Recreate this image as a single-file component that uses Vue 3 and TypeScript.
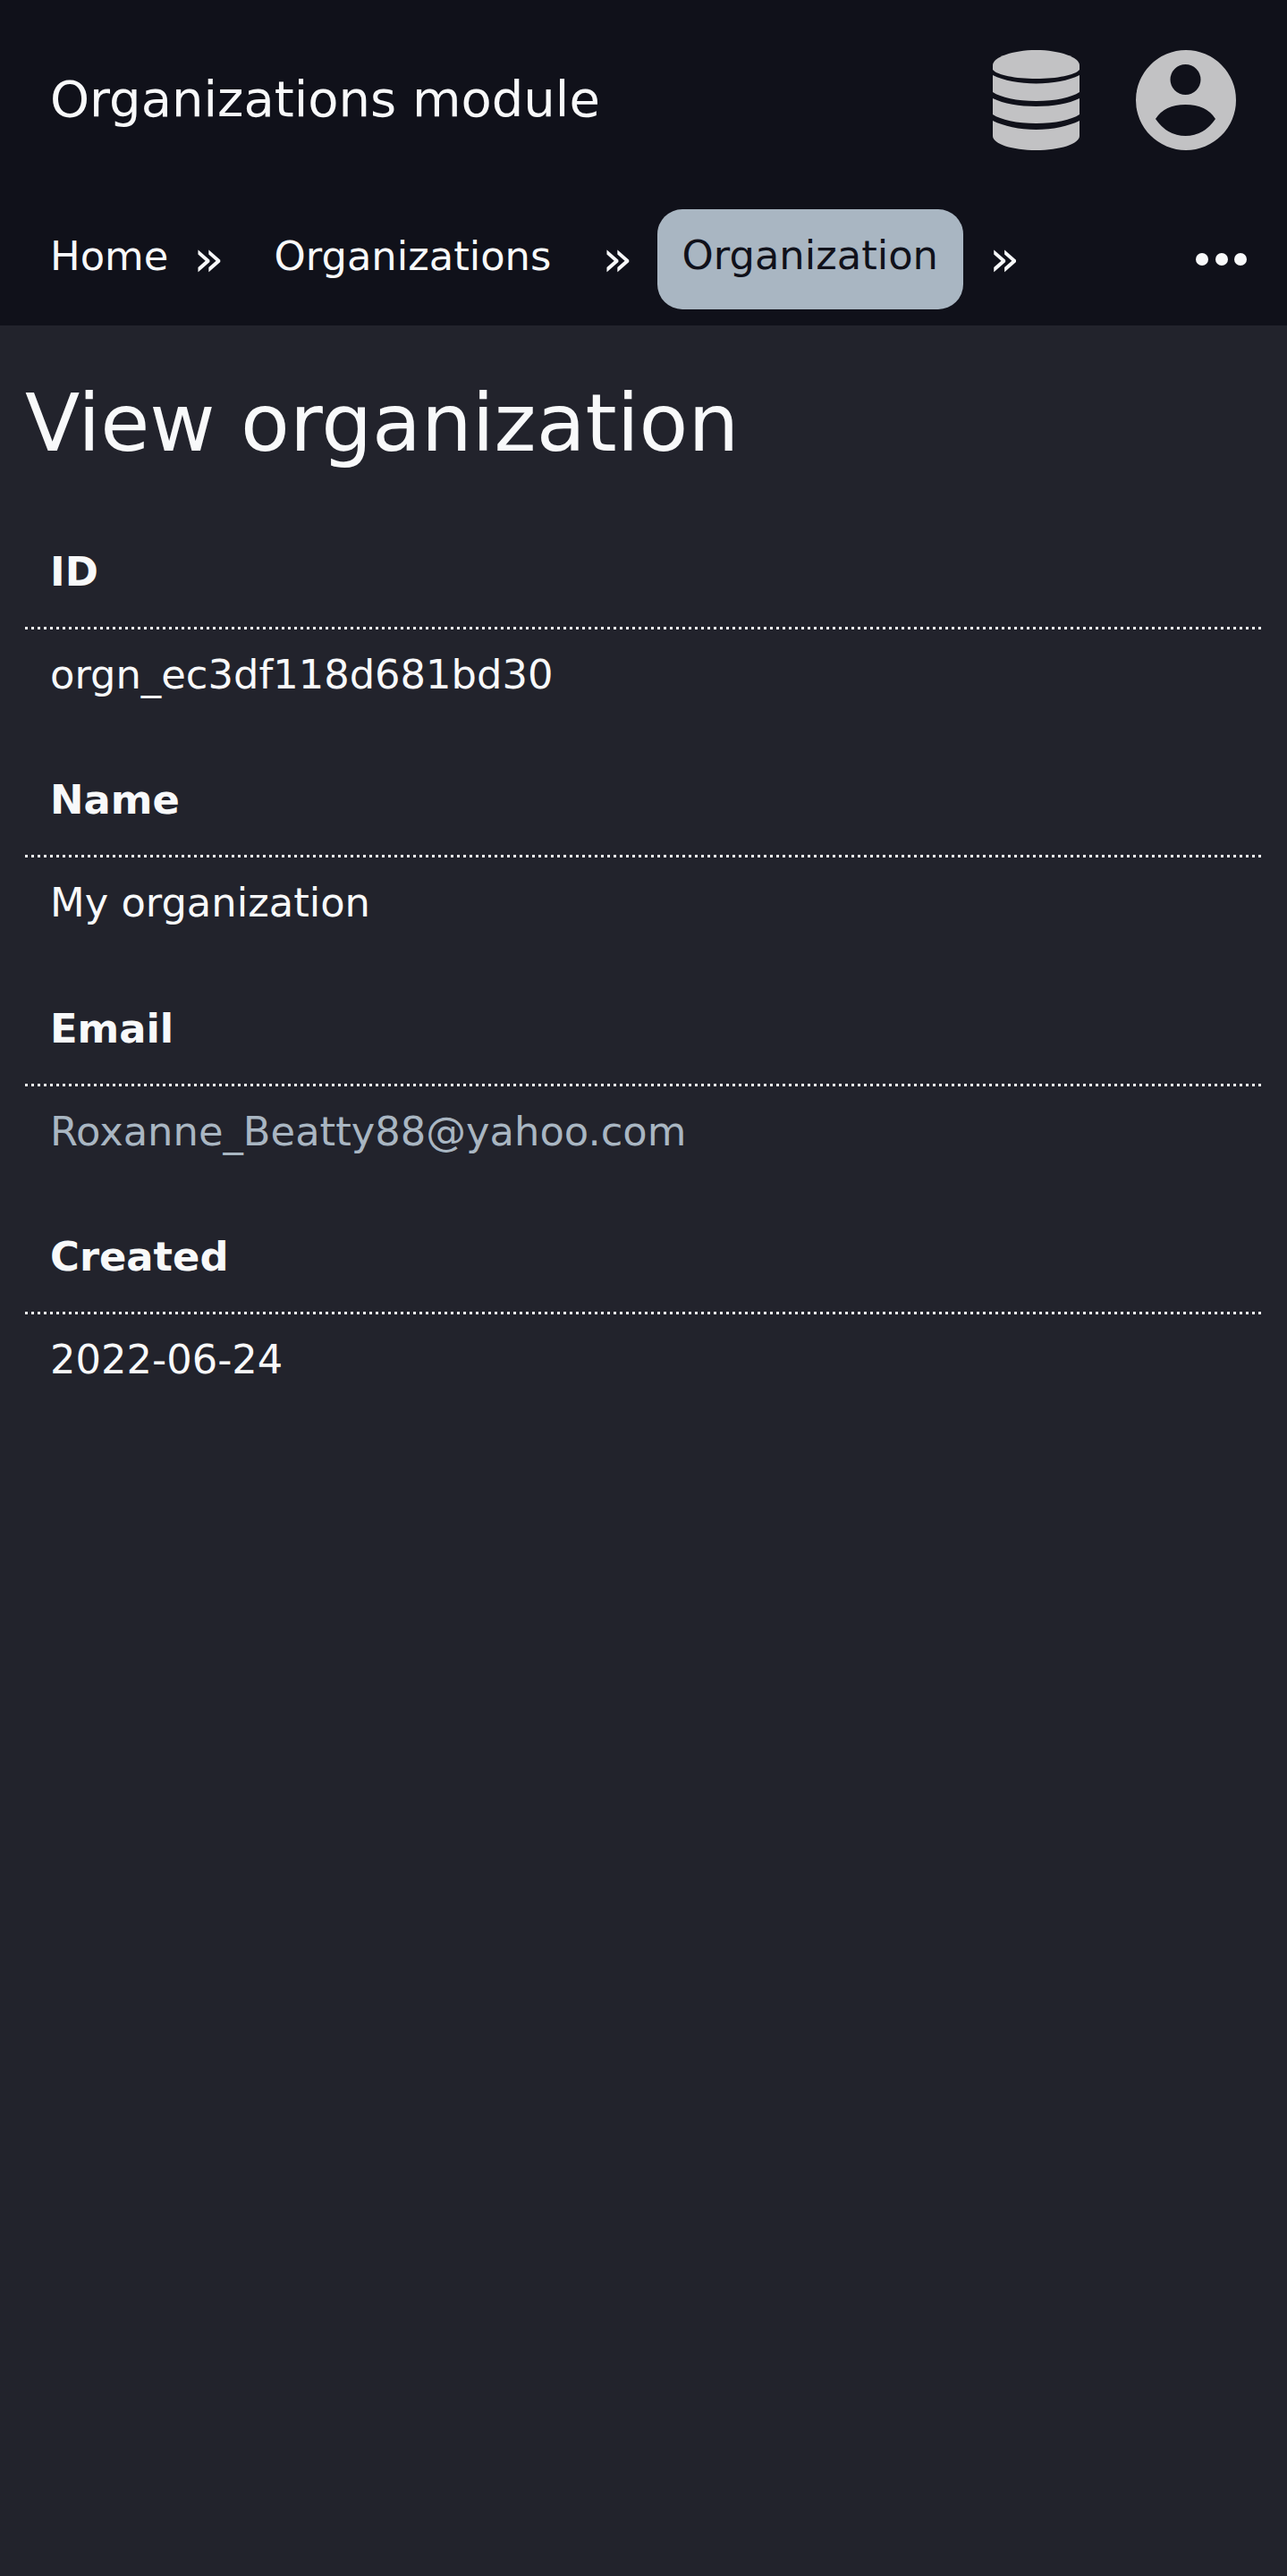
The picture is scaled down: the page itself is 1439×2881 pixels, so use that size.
<script setup lang="ts">
const fields = [
  { label: 'ID', value: 'orgn_ec3df118d681bd30' },
  { label: 'Name', value: 'My organization' },
  { label: 'Email', value: 'Roxanne_Beatty88@yahoo.com', link: true },
  { label: 'Created', value: '2022-06-24' },
]
</script>

<template>
  <div class="page">
    <header class="top">
      <div class="title-row">
        <span class="module">Organizations module</span>
        <div class="icons">
          <svg class="db" viewBox="0 0 97 112" width="97" height="112">
            <path d="M0 17C0 8 22 0 48.500 0S97 8 97 17V22C92 28 72 32 48.500 32S5 28 0 22z" />
            <path d="M0 28C12 34 30 37.500 48.500 37.500S85 34 97 28V47C88 53 70 57 48.500 57S9 53 0 47z" />
            <path d="M0 54C12 60 30 63 48.500 63S85 60 97 54V72C88 78 70 82 48.500 82S9 78 0 72z" />
            <path d="M0 79C12 85 30 89 48.500 89S85 85 97 79V96C97 105 75 112 48.500 112S0 105 0 96z" />
          </svg>
          <svg class="avatar" viewBox="0 0 112 112" width="112" height="112">
            <path fill-rule="evenodd" d="M56 0a56 56 0 1 0 0 112a56 56 0 1 0 0-112zM55.500 16a17 17 0 1 1 0 34a17 17 0 1 1 0-34zM22 77Q32 61 55.500 61T89 77Q76 96 55.500 96T22 77z" />
          </svg>
        </div>
      </div>
      <nav class="crumbs">
        <a class="crumb">Home</a>
        <span class="sep sep-a">»</span>
        <a class="crumb crumb-b">Organizations</a>
        <span class="sep sep-b">»</span>
        <a class="crumb active">Organization</a>
        <span class="sep sep-c">»</span>
        <div class="more">
          <i></i><i></i><i></i>
        </div>
      </nav>
    </header>

    <main class="content">
      <h1>View organization</h1>
      <dl>
        <template v-for="f in fields" :key="f.label">
          <dt>{{ f.label }}</dt>
          <dd :class="{ link: f.link }">{{ f.value }}</dd>
        </template>
      </dl>
    </main>
  </div>
</template>

<style>
body {
  margin: 0;
  background: #22232c;
}
</style>

<style scoped>
.page {
  min-height: 2881px;
  background: #22232c;
  color: #f8f9fa;
  font-family: "DejaVu Sans", sans-serif;
}
.top {
  background: #10111a;
  height: 364px;
  box-sizing: border-box;
}
.title-row {
  display: flex;
  justify-content: space-between;
  height: 234px;
  padding: 55px 57px 0 56px;
  box-sizing: border-box;
}
.icons {
  display: flex;
  gap: 63px;
  fill: #c2c2c4;
  margin-top: 1px;
}
.module {
  font-size: 56px;
  line-height: 112px;
}
.crumbs {
  display: flex;
  align-items: flex-start;
  padding-left: 56px;
  font-size: 44.800px;
}
.crumb {
  line-height: 84px;
  height: 112px;
  padding-top: 11px;
  box-sizing: border-box;
}
.crumb-b {
  margin-left: 56px;
}
.active {
  background: #a9b6c2;
  color: #10111a;
  border-radius: 28px;
  padding: 10px 28px 0;
  margin-left: 27px;
}
.sep {
  font-size: 56px;
  line-height: 84px;
  padding-top: 13px;
}
.sep-a {
  margin-left: 28px;
}
.sep-b {
  margin-left: 57px;
}
.sep-c {
  margin-left: 29px;
}
.more {
  margin-left: auto;
  margin-right: 45px;
  margin-top: 49px;
  display: flex;
  gap: 7.500px;
}
.more i {
  display: block;
  width: 14px;
  height: 14px;
  border-radius: 50%;
  background: #f8f9fa;
}
.content {
  padding: 56px 28px 0;
}
h1 {
  margin: 0 0 78px;
  font-size: 89.600px;
  font-weight: 400;
  line-height: 1.200;
}
dl {
  margin: 0;
}
dt {
  font-size: 44.800px;
  font-weight: 700;
  padding: 0 28px 31px;
  line-height: 67px;
  /* dotted border snaps to a 6px pitch, reference has 7px */
  background: repeating-linear-gradient(90deg, #f8f9fa 0 3.500px, transparent 3.500px 7px) left bottom / 100% 3px no-repeat;
}
dd {
  margin: 0 0 73.500px;
  font-size: 44.800px;
  line-height: 67px;
  padding: 17px 28px 0;
}
.link {
  color: #a9b6c2;
}
</style>
